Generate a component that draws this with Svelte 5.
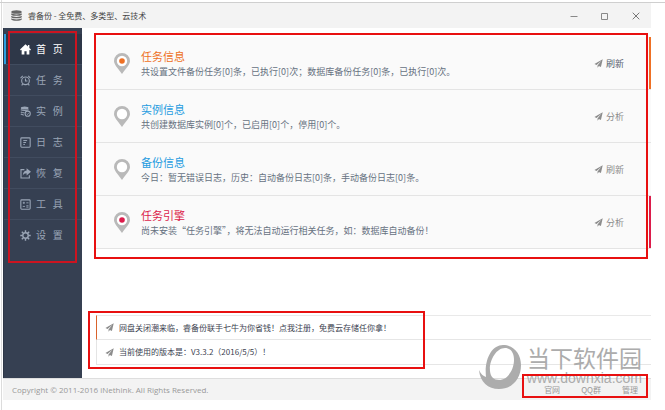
<script>
  const nav = [
    { icon: 'home', a: '首', b: '页' },
    { icon: 'clock', a: '任', b: '务' },
    { icon: 'db', a: '实', b: '例' },
    { icon: 'log', a: '日', b: '志' },
    { icon: 'share', a: '恢', b: '复' },
    { icon: 'tools', a: '工', b: '具' },
    { icon: 'gear', a: '设', b: '置' }
  ];
  let active = $state(0);

  const cards = [
    { tone: 'orange', dot: true, title: '任务信息', text: '共设置文件备份任务[0]条，已执行[0]次；数据库备份任务[0]条，已执行[0]次。', action: '刷新', edge: true },
    { tone: 'blue', dot: false, title: '实例信息', text: '共创建数据库实例[0]个，已启用[0]个，停用[0]个。', action: '分析', edge: false },
    { tone: 'blue', dot: false, title: '备份信息', text: '今日：暂无错误日志，历史：自动备份日志[0]条，手动备份日志[0]条。', action: '刷新', edge: false },
    { tone: 'red', dot: true, title: '任务引擎', text: '尚未安装“任务引擎”，将无法自动运行相关任务，如：数据库自动备份！', action: '分析', edge: true }
  ];

  const news = [
    '网盘关闭潮来临，睿备份联手七牛为你省钱！点我注册，免费云存储任你拿！',
    '当前使用的版本是：V3.3.2（2016/5/5）！'
  ];
  const links = ['官网', 'QQ群', '管理'];
</script>

{#snippet plane()}
  <svg class="plane" viewBox="0 0 16 16" aria-hidden="true">
    <path d="M15.5 0.5 0.8 9l3.8 1.700L13 3.200 6.300 11.400v4.100l2.400-2.900 3.600 1.600z" fill="currentColor" />
  </svg>
{/snippet}

{#snippet navIcon(name)}
  <svg class="nav-icon" viewBox="0 0 20 20" fill="none" stroke="currentColor" stroke-width="2" aria-hidden="true">
    {#if name === 'home'}
      <path d="M10 .5 0 10l1.600 1.800L3 10.600V19h5v-6h4v6h5v-8.400l1.400 1.200L20 10l-3-2.900V2h-2.600v2.600z" fill="currentColor" stroke="none" />
    {:else if name === 'clock'}
      <circle cx="10" cy="10.500" r="7" />
      <path d="M10 6.500v4.500h3.500M1 5.500 5 1.500M19 5.500l-4-4M5 16.500 3 19M15 16.500l2 2.500" />
    {:else if name === 'db'}
      <ellipse cx="8.500" cy="3.500" rx="7" ry="2.800" fill="currentColor" stroke="none" />
      <path d="M1.500 6.500c2 2.300 12 2.300 14 0M1.500 10.500c1.500 1.500 4 1.900 6.500 1.800M1.500 14.500c1.500 1.500 3 1.900 5.500 1.800" />
      <circle cx="14" cy="14" r="4.700" />
      <path d="M12 14l1.500 1.500 2.500-3" stroke-width="1.500" />
    {:else if name === 'log'}
      <rect x="1.500" y="1.500" width="17" height="17" rx="1.500" />
      <path d="M6 6.500h7M6 10h5M6 13.500h3" stroke-width="1.800" />
    {:else if name === 'share'}
      <path d="M8 3H1.800v15.200H17V13" />
      <path d="M12 .5 20 7l-8 6.500V9.700c-3.500 0-5.500 1.300-7 4.300.3-5.500 2.500-9 7-9.500z" fill="currentColor" stroke="none" />
    {:else if name === 'tools'}
      <rect x="1.500" y="1.500" width="17" height="17" rx="1.500" />
      <path d="M5 7h4M7 5v4M11.500 7h4M5 13.500h4M11.500 12.300h4M11.500 14.800h4" stroke-width="1.600" />
    {:else}
      <circle cx="10" cy="10" r="5" stroke-width="2.600" />
      <path d="M10 .5v4M10 15.500v4M.5 10h4M15.500 10h4M3.300 3.300l2.800 2.800M13.900 13.900l2.800 2.800M16.700 3.300l-2.800 2.800M6.100 13.900l-2.800 2.800" stroke-width="2.600" />
    {/if}
  </svg>
{/snippet}

<div class="page" lang="zh-CN">
  <div class="window">
    <header>
      <svg class="logo" viewBox="0 0 22 22" aria-hidden="true">
        <g fill="#666">
          <ellipse cx="11" cy="4" rx="10.500" ry="3.700" />
          <path d="M.5 6.500c2.500 3 18.500 3 21 0v2.800c-2 3.200-19 3.200-21 0z" />
          <path d="M.5 11.500c2.500 3 18.500 3 21 0v2.800c-2 3.200-19 3.200-21 0z" />
          <path d="M.5 16.500c2.500 3 18.500 3 21 0v2.300c-2 3.600-19 3.600-21 0z" />
        </g>
      </svg>
      <h1>睿备份 - 全免费、多类型、云技术</h1>
      <div class="controls">
        <button aria-label="最小化"><svg viewBox="0 0 8 8"><path d="M.5 4.500h7" /></svg></button>
        <button aria-label="最大化"><svg viewBox="0 0 8 8"><path d="M.5 1.500h6v6h-6z" /></svg></button>
        <button aria-label="关闭"><svg viewBox="0 0 8 8"><path class="x" d="M.7.7l6.600 6.600M7.300.7.7 7.300" /></svg></button>
      </div>
    </header>

    <div class="body">
      <aside>
        <nav>
          {#each nav as item, i}
            <button class:active={active === i} onclick={() => (active = i)}>
              {@render navIcon(item.icon)}
              <span>{item.a}&nbsp;&nbsp;&nbsp;{item.b}</span>
            </button>
          {/each}
          <div class="mark mark-nav"></div>
        </nav>
      </aside>

      <main>
        <section class="cards">
          {#each cards as card, i}
            <article class={card.tone} class:edge={card.edge}>
              <svg class="pin" viewBox="0 0 16 21" aria-hidden="true">
                <path d="M8 0a8 8 0 0 0-8 8c0 3.500 3.500 6.500 8 13 4.500-6.500 8-9.500 8-13a8 8 0 0 0-8-8z" fill="#b9b9b9" />
                <circle cx="8" cy="8" r="5.200" fill="#fff" />
                {#if card.dot}<circle cx="8" cy="8" r="2.800" fill="currentColor" />{/if}
              </svg>
              <div class="info">
                <h2>{card.title}</h2>
                <p>{card.text}</p>
              </div>
              <button class="action" class:strong={i === 0}>{@render plane()}<span>{card.action}</span></button>
            </article>
          {/each}
          <div class="mark mark-cards"></div>
        </section>

        <div class="news">
          <ul>
            {#each news as line}
              <li>{@render plane()}<a href="#news">{line}</a></li>
            {/each}
          </ul>
          <div class="mark mark-news"></div>
        </div>
      </main>
    </div>

    <footer>
      <span class="copy">Copyright © 2011-2016 iNethink. All Rights Reserved.</span>
      <div class="links">
        {#each links as link}<a href="#link">{link}</a>{/each}
      </div>
      <div class="watermark">
        <svg viewBox="0 0 42 44" aria-hidden="true">
          <path fill-rule="evenodd" d="M24 0C35 0 42 9 42 20c0 13-8 24-22 24C9 44 1 37 0 25c2 4 4 6 7 7C5 14 13 0 24 0zM26 3C17 3 10 16 11 26c.5 6 4 9 9 9 9 0 15-11 15-20 0-7-3-12-9-12z" fill="#acacac" />
        </svg>
        <div class="wm-text">
          <span class="wm-name">当下软件园</span>
          <span class="wm-url">www.downxia.com</span>
        </div>
      </div>
      <div class="mark mark-links"></div>
    </footer>
  </div>
</div>

<style>
  :global(body) {
    margin: 0;
    background: #fff;
  }
  .page {
    box-sizing: border-box;
    min-height: 100vh;
    display: flex;
    flex-direction: column;
    padding: 2px 14px 10px 1px;
    font-family: 'Noto Sans CJK SC', sans-serif;
    background: linear-gradient(#cfcfcf, #cfcfcf) 0 2px / 100% 1px no-repeat,
      linear-gradient(#dcdcdc, #dcdcdc) 1px 0 / 1px 100% no-repeat;
  }
  .window {
    flex: 1;
    display: flex;
    flex-direction: column;
    margin: 1px 0 0 2px;
  }
  h1, h2, p, ul {
    margin: 0;
    padding: 0;
    font-weight: 400;
  }
  button {
    margin: 0;
    border: 0;
    padding: 0;
    background: none;
    font-family: inherit;
    cursor: pointer;
  }
  a {
    color: inherit;
    text-decoration: none;
  }

  header {
    height: 25px;
    display: flex;
    align-items: center;
    padding: 0 11px 0 8px;
    background: #f3f3f3;
  }
  .logo {
    width: 11px;
    height: 11px;
    margin-right: 6px;
  }
  h1 {
    font-size: 8px;
    line-height: 12px;
    color: #444;
  }
  .controls {
    margin-left: auto;
    display: flex;
    gap: 23px;
  }
  .controls button {
    width: 8px;
    height: 8px;
    display: flex;
  }
  .controls svg {
    width: 8px;
    height: 8px;
    fill: none;
    stroke: #888;
  }
  .controls .x {
    stroke: #777;
  }

  .body {
    flex: 1;
    display: flex;
  }
  aside {
    width: 79px;
    flex: none;
    padding-top: 6px;
    background: #364052;
    box-sizing: border-box;
    border-left: 1px solid #2e3747;
  }
  nav {
    position: relative;
    display: flex;
    flex-direction: column;
  }
  nav button {
    height: 31px;
    display: flex;
    align-items: center;
    gap: 5px;
    padding-left: 16px;
    border-bottom: 1px solid #414c5f;
    color: #9aa5b6;
    font-size: 10px;
    line-height: 14px;
  }
  nav button:nth-of-type(7) {
    border-bottom-color: transparent;
  }
  nav .active {
    color: #fff;
    background: #2e3748;
    box-shadow: inset 2px 0 #2c9fe0;
  }
  .nav-icon {
    width: 11px;
    height: 11px;
    flex: none;
  }

  main {
    flex: 1;
    min-width: 0;
    display: flex;
    flex-direction: column;
    padding: 9px 0 13px 14px;
  }
  .cards, .news {
    position: relative;
  }
  article {
    box-sizing: border-box;
    height: 53px;
    display: flex;
    align-items: center;
    padding: 1px 27px 0 18px;
    background: #fafafa;
    border-bottom: 1px solid #e4e4e4;
  }
  .orange { color: #ee7024; }
  .blue { color: #1f9ce0; }
  .red { color: #dc1c4b; }
  .edge {
    box-shadow: inset -2px 0 currentColor;
  }
  .pin {
    width: 16px;
    height: 21px;
    flex: none;
    margin-right: 11px;
  }
  .info {
    flex: 1;
    min-width: 0;
  }
  h2 {
    font-size: 11px;
    line-height: 15px;
  }
  p {
    font-size: 9px;
    line-height: 15px;
    color: #66717f;
  }
  .action {
    display: flex;
    align-items: center;
    gap: 3px;
    color: #8c8c8c;
    font-size: 9px;
    line-height: 14px;
  }
  .strong span {
    color: #56606f;
  }
  .plane {
    width: 9px;
    height: 9px;
    flex: none;
    color: #8c8c8c;
  }

  .news {
    margin-top: auto;
  }
  ul {
    list-style: none;
  }
  li {
    box-sizing: border-box;
    height: 25px;
    display: flex;
    align-items: center;
    gap: 5px;
    padding-left: 8px;
    border-left: 1px solid #e4e4e4;
    border-bottom: 1px solid #e6e6e6;
    color: #3c4250;
    font-size: 8px;
    line-height: 12px;
  }
  li:first-child {
    border-left-color: #d9632c;
    border-top: 1px solid #e9e9e9;
  }

  footer {
    position: relative;
    box-sizing: border-box;
    height: 22px;
    display: flex;
    align-items: center;
    justify-content: space-between;
    padding: 0 13px 0 9px;
    background: #f3f3f3;
    border-top: 1px solid #dedede;
    color: #999;
    font-size: 8px;
    line-height: 12px;
  }
  .copy {
    font-family: 'Open Sans', 'Noto Sans', sans-serif;
  }
  .links {
    display: flex;
    gap: 21px;
  }

  .watermark {
    position: absolute;
    right: 9px;
    bottom: 11px;
    display: flex;
    gap: 6px;
    color: #acacac;
    pointer-events: none;
  }
  .watermark svg {
    width: 42px;
    height: 44px;
  }
  .wm-text {
    display: flex;
    flex-direction: column;
    align-items: center;
  }
  .wm-name {
    font-size: 23px;
    line-height: 24px;
  }
  .wm-url {
    font-family: 'Liberation Sans', sans-serif;
    font-size: 14px;
    line-height: 18px;
  }

  .mark {
    position: absolute;
    border: 2px solid #e81010;
    pointer-events: none;
  }
  .mark-nav {
    inset: -3px 5px -12px 4px;
    border-color: #cc1420;
  }
  .mark-cards { inset: -4px 3px -10px -2px; }
  .mark-news {
    inset: -4px auto -4px -8px;
    width: calc(61% - 2px);
    box-sizing: border-box;
  }
  .mark-links {
    inset: -5px 3px 2px auto;
    width: 122px;
  }
</style>
